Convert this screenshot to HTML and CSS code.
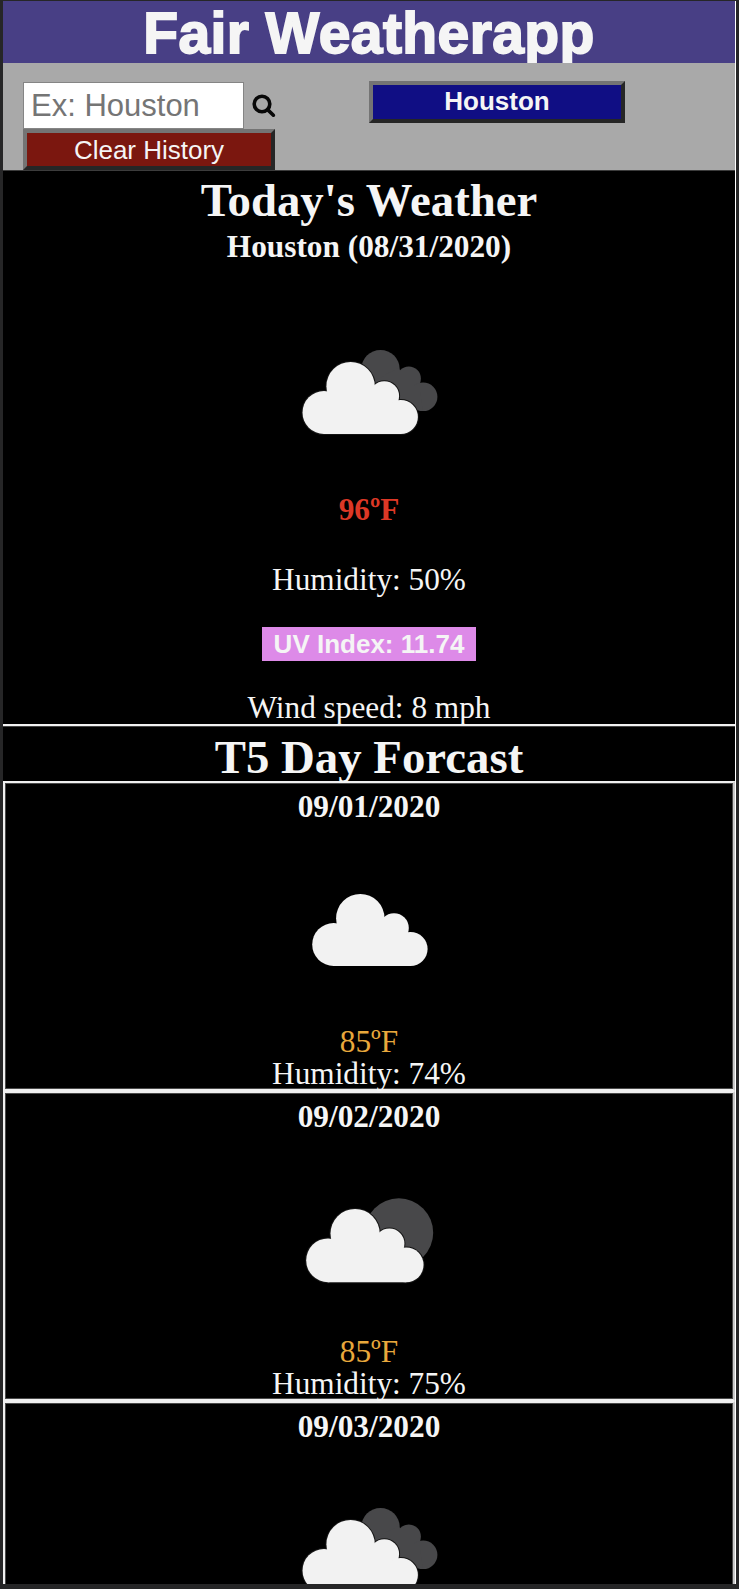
FILE: index.html
```html
<!DOCTYPE html>
<html lang="en">
<head>
<meta charset="utf-8">
<title>Fair Weatherapp</title>
<link rel="stylesheet" href="styles.css">
</head>
<body>
<svg class="defs" aria-hidden="true">
  <defs>
    <g id="cloud">
      <circle cx="44.2" cy="82.5" r="21.5"/><circle cx="70.8" cy="56.2" r="24.2"/>
      <circle cx="104.5" cy="66" r="14.8"/><circle cx="121" cy="87" r="17.1"/>
      <path d="M44 104V72L60 56H100L121 82V104Z"/>
    </g>
    <g id="dark-cloud">
      <circle cx="100.7" cy="39.2" r="19.2"/><circle cx="129" cy="48.5" r="12.1"/><circle cx="143.3" cy="66.8" r="14.3"/>
      <path d="M96 50L118 38L140 60L143 81L120 75Z"/>
    </g>
  </defs>
</svg>
<main class="page">
  <header class="header"><h1 class="title">Fair Weatherapp</h1></header>
  <section class="toolbar">
    <div class="search">
      <div class="search-row">
        <input class="city" type="text" placeholder="Ex: Houston">
        <svg class="lens" viewBox="0 0 24 24"><circle cx="10" cy="10" r="7.8"/><path d="M15.6 15.6L21.4 21.2"/></svg>
      </div>
      <button class="btn clear">Clear History</button>
    </div>
    <button class="btn recent">Houston</button>
  </section>
  <section class="today">
    <h2 class="heading">Today's Weather</h2>
    <h3 class="line place">Houston (08/31/2020)</h3>
    <svg class="icon" viewBox="-0.8 0 180 120"><use href="#dark-cloud" class="dark"/><use href="#cloud" class="edge"/><use href="#cloud" class="white"/></svg>
    <p class="line temp-hot">96ºF</p>
    <p class="line humidity">Humidity: 50%</p>
    <div class="uv">UV Index: 11.74</div>
    <p class="line wind">Wind speed: 8 mph</p>
  </section>
  <h2 class="heading forecast-title">T5 Day Forcast</h2>
  <article class="card">
    <h3 class="line">09/01/2020</h3>
    <svg class="icon" viewBox="-0.8 0 180 120"><use href="#cloud" class="white" transform="translate(9.7 -8)"/></svg>
    <p class="line temp">85ºF</p>
    <p class="line">Humidity: 74%</p>
  </article>
  <article class="card">
    <h3 class="line">09/02/2020</h3>
    <svg class="icon" viewBox="-0.8 0 180 120"><circle cx="119" cy="52.7" r="34.4" class="dark"/><g transform="translate(3.3 -3.6) scale(1.017)"><use href="#cloud" class="edge"/><use href="#cloud" class="white"/></g></svg>
    <p class="line temp">85ºF</p>
    <p class="line">Humidity: 75%</p>
  </article>
  <article class="card">
    <h3 class="line">09/03/2020</h3>
    <svg class="icon" viewBox="-0.8 2 180 120"><use href="#dark-cloud" class="dark"/><use href="#cloud" class="edge"/><use href="#cloud" class="white"/></svg>
  </article>
</main>
</body>
</html>
```
FILE: styles.css
```css
* { box-sizing: border-box; }
html { background: #262627; }
body {
  margin: 0;
  height: 1589px;
  padding: 1px 3px 5px;
  overflow: hidden;
  background: #262627;
  color: #f5f5f5;
  font-family: "Liberation Serif", "Times New Roman", serif;
}
h1, h2, h3, p { margin: 0; }
.defs { display: none; }
.page {
  width: 733px;
  height: 1583px;
  overflow: hidden;
  background: #000;
  border-right: 1px solid #fff;
  text-align: center;
}
.header { height: 62px; background: #483f85; overflow: hidden; }
.title {
  font: bold 57px/62px "Liberation Sans", Arial, sans-serif;
  letter-spacing: 0.4px;
  -webkit-text-stroke: 1.8px #f5f5f5;
  padding-top: 1px;
}
.toolbar {
  display: flex;
  align-items: flex-start;
  gap: 93px;
  height: 108px;
  padding: 18px 20px 0;
  background: #a9a9a9;
  border-bottom: 1px solid #3c3c3c;
}
.search { width: 253px; padding-top: 1px; }
.search-row { display: flex; gap: 8px; align-items: center; }
.city {
  width: 221px;
  height: 47px;
  padding: 0 0 0 7px;
  border: 1px solid #858585;
  border-radius: 0;
  background: #fff;
  font: 31px "Liberation Sans", Arial, sans-serif;
}
.city::placeholder { color: #757575; opacity: 1; }
.lens { width: 24px; height: 24px; fill: none; stroke: #080808; stroke-width: 3.6; stroke-linecap: round; }
.btn {
  display: block;
  padding: 0;
  height: 42px;
  border: 4px solid;
  border-color: #747474 #262626 #262626 #747474;
  color: #f5f5f5;
  font: 26px/32px "Liberation Sans", Arial, sans-serif;
}
.clear { width: 252px; height: 41px; background: #7b170f; }
.recent { width: 256px; line-height: 30px; padding-bottom: 2px; background: #100e84; font-weight: bold; }
.today { height: 555px; padding-top: 2px; border-bottom: 2px solid #f2f2f2; box-shadow: 0 1px #444; }
.heading { font-size: 46.8px; line-height: 54px; }
.line { height: 32px; font-size: 31.3px; line-height: 33px; }
.place { margin-top: 3px; }
.icon { display: block; width: 180px; height: 120px; margin: 48px auto 35px; }
.today .icon { margin: 68px auto 43px; }
.white { fill: #f2f2f2; }
.dark { fill: #48484a; }
.edge { fill: #151515; stroke: #151515; stroke-width: 2; }
.temp-hot { color: #dd3826; font-weight: bold; }
.humidity { margin-top: 38px; }
.uv {
  width: 214px;
  height: 34px;
  margin: 32px auto 30px;
  background: #dd8ae8;
  font: bold 26px/34px "Liberation Sans", Arial, sans-serif;
}
.forecast-title { height: 55px; padding-top: 4px; }
.card {
  height: 310px;
  padding-top: 7px;
  border: 2px solid #f0f0f0;
  border-right-color: #c8c8c8;
  box-shadow: inset 0 0 0 1px #4a4a4a;
}
.temp { color: #e8a83c; }
```
